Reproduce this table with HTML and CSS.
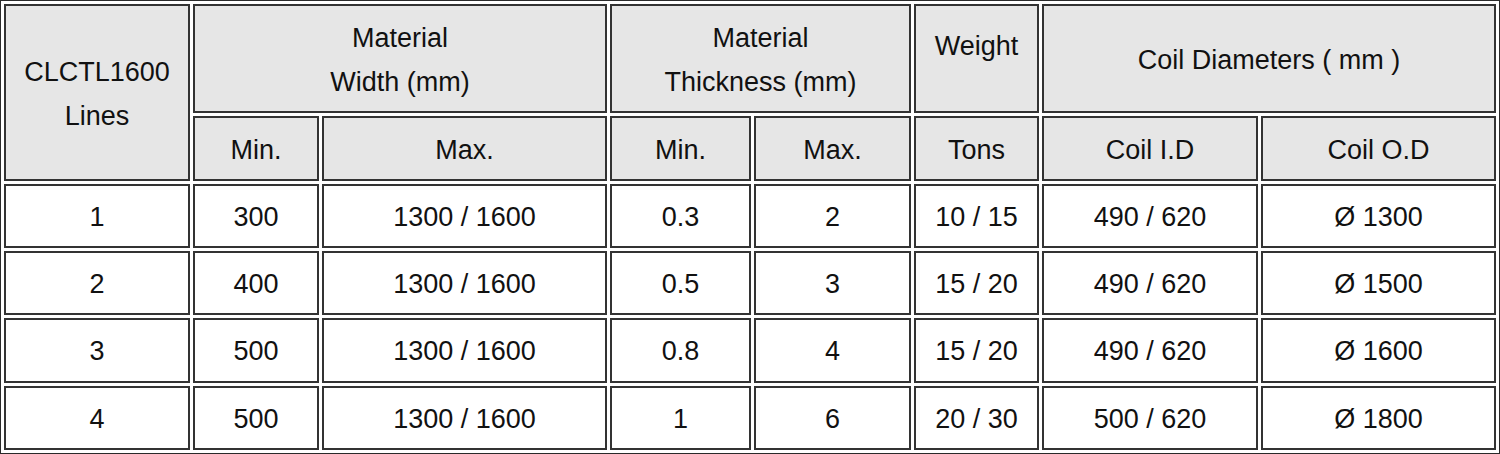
FILE: index.html
```html
<!DOCTYPE html>
<html>
<head>
<meta charset="utf-8">
<link rel="stylesheet" href="styles.css">
</head>
<body>
<table class="spec">
  <colgroup>
    <col class="c1"><col class="c2"><col class="c3"><col class="c4"><col class="c5"><col class="c6"><col class="c7"><col class="c8">
  </colgroup>
  <thead>
    <tr class="h1">
      <th rowspan="2">CLCTL1600<br>Lines</th>
      <th colspan="2">Material<br>Width (mm)</th>
      <th colspan="2">Material<br>Thickness (mm)</th>
      <th class="top">Weight</th>
      <th colspan="2">Coil Diameters ( mm )</th>
    </tr>
    <tr class="h2">
      <th>Min.</th><th>Max.</th><th>Min.</th><th>Max.</th><th>Tons</th><th>Coil I.D</th><th>Coil O.D</th>
    </tr>
  </thead>
  <tbody>
    <tr class="r"><td>1</td><td>300</td><td>1300 / 1600</td><td>0.3</td><td>2</td><td>10 / 15</td><td>490 / 620</td><td>Ø 1300</td></tr>
    <tr class="r"><td>2</td><td>400</td><td>1300 / 1600</td><td>0.5</td><td>3</td><td>15 / 20</td><td>490 / 620</td><td>Ø 1500</td></tr>
    <tr class="r r3"><td>3</td><td>500</td><td>1300 / 1600</td><td>0.8</td><td>4</td><td>15 / 20</td><td>490 / 620</td><td>Ø 1600</td></tr>
    <tr class="r"><td>4</td><td>500</td><td>1300 / 1600</td><td>1</td><td>6</td><td>20 / 30</td><td>500 / 620</td><td>Ø 1800</td></tr>
  </tbody>
</table>
</body>
</html>
```

FILE: styles.css
```css
html, body {
  margin: 0;
  padding: 0;
  background: #fff;
}

.spec {
  width: 1500px;
  table-layout: fixed;
  border-collapse: separate;
  border-spacing: 3px;
  border: 1px solid #2a2a2a;
  font-family: "Liberation Sans", Arial, sans-serif;
  font-size: 27px;
  color: #111;
}

.c1 { width: 186px; }
.c2 { width: 126px; }
.c3 { width: 285px; }
.c4 { width: 141px; }
.c5 { width: 157px; }
.c6 { width: 125px; }
.c7 { width: 216px; }
.c8 { width: 235px; }

.spec th,
.spec td {
  box-sizing: border-box;
  border: 2px solid #333;
  padding: 1px 0 0;
  text-align: center;
  vertical-align: middle;
  font-weight: normal;
  line-height: 44px;
}

.spec th {
  background: #e6e6e6;
  padding-top: 2px;
}

.spec td {
  background: #fff;
}

.h1 th { height: 109px; }
.h1 th.top { vertical-align: top; padding-top: 18px; }
.h2 th { height: 65px; }
.r td { height: 64px; }
.r3 td { height: 65px; }
```
